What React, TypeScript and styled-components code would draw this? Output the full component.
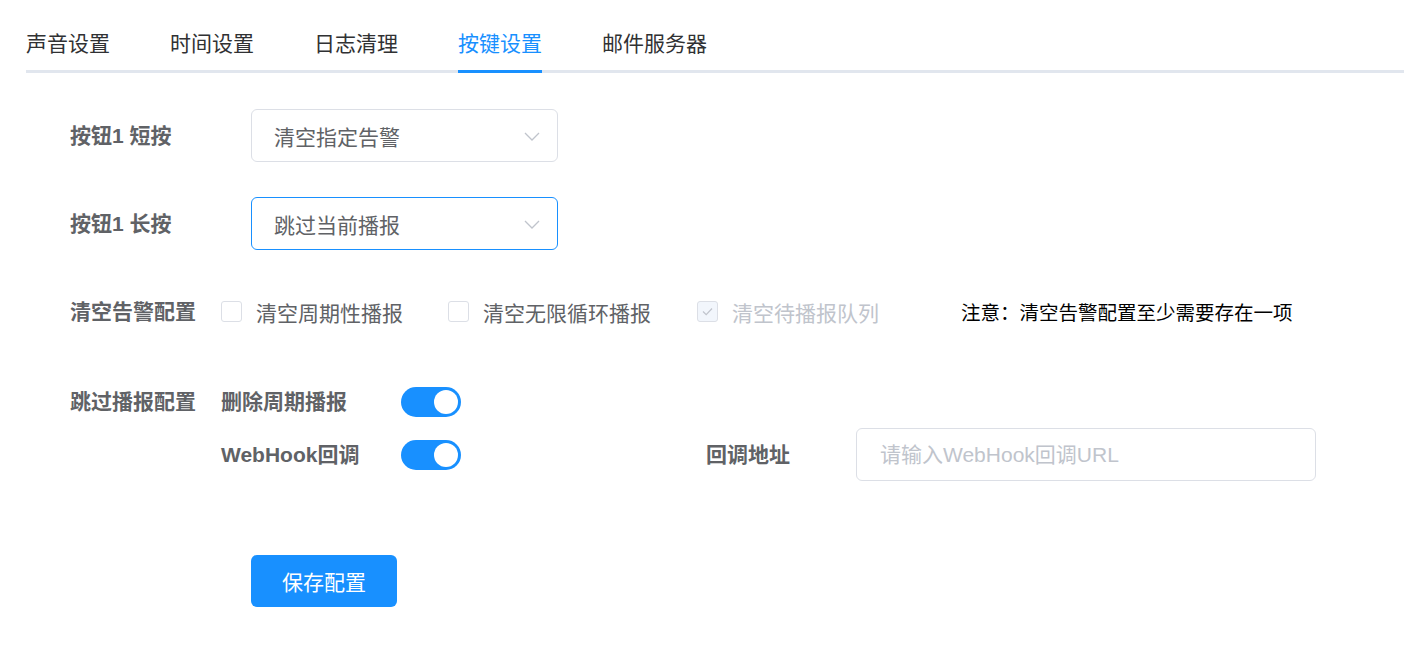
import React, { useState } from "react";
import styled, { createGlobalStyle } from "styled-components";

const BLUE = "#1890ff";
const FONT = `"Liberation Sans", "Noto Sans CJK SC", sans-serif`;

const GlobalStyle = createGlobalStyle`
  html, body {
    margin: 0;
    padding: 0;
    background: #fff;
    font-family: ${FONT};
  }
  * { box-sizing: border-box; }
`;

const Page = styled.div`
  padding: 16px 0 0 26px;
  width: 1404px;
  min-height: 656px;
`;

const TabBar = styled.div`
  display: flex;
  border-bottom: 3px solid #e1e6ee;
`;

const TabItem = styled.div<{ $active?: boolean }>`
  height: 57px;
  line-height: 55px;
  font-size: 21px;
  margin-right: 60px;
  margin-bottom: -3px;
  border-bottom: 3px solid ${(p) => (p.$active ? BLUE : "transparent")};
  color: ${(p) => (p.$active ? BLUE : "#303133")};
  cursor: pointer;
  white-space: nowrap;
`;

const Form = styled.div`
  margin-top: 36px;
  padding-left: 44px;
  display: flex;
  flex-direction: column;
`;

const Row = styled.div<{ $gap?: number }>`
  display: flex;
  align-items: center;
  min-height: 53px;
  margin-top: ${(p) => p.$gap ?? 0}px;
`;

const Label = styled.div<{ $width: number }>`
  width: ${(p) => p.$width}px;
  flex: none;
  font-size: 21px;
  font-weight: 700;
  color: #606266;
  line-height: 30px;
  white-space: nowrap;
`;

const SelectBox = styled.div<{ $focused?: boolean }>`
  width: 307px;
  height: 53px;
  border: 1px solid ${(p) => (p.$focused ? BLUE : "#dcdfe6")};
  border-radius: 6px;
  display: flex;
  align-items: center;
  justify-content: space-between;
  padding: 0 16px 0 22px;
  font-size: 21px;
  color: #606266;
  background: #fff;
`;

const Arrow = () => (
  <svg width="18" height="18" viewBox="0 0 18 18" fill="none">
    <polyline points="2,6 9,13 16,6" stroke="#c0c4cc" strokeWidth="1.3" />
  </svg>
);

const CheckItem = styled.label<{ $disabled?: boolean; $after: number }>`
  display: flex;
  align-items: center;
  margin-right: ${(p) => p.$after}px;
  font-size: 21px;
  color: ${(p) => (p.$disabled ? "#c0c4cc" : "#606266")};
  white-space: nowrap;
`;

const Box = styled.span<{ $disabled?: boolean }>`
  width: 21px;
  height: 21px;
  border: 1px solid #dcdfe6;
  border-radius: 3px;
  margin-right: 14px;
  display: inline-flex;
  align-items: center;
  justify-content: center;
  background: ${(p) => (p.$disabled ? "#f2f6fc" : "#fff")};
`;

const Note = styled.span`
  font-size: 19.5px;
  color: #000;
  white-space: nowrap;
`;

const SkipBlock = styled.div`
  display: flex;
  align-items: flex-start;
  margin-top: 49px;
`;

const SubRows = styled.div`
  display: flex;
  flex-direction: column;
  gap: 11px;
`;

const SubRow = styled.div<{ $tall?: boolean }>`
  display: flex;
  align-items: center;
  height: ${(p) => (p.$tall ? 53 : 30)}px;
`;

const SwitchTrack = styled.button<{ $on: boolean }>`
  width: 60px;
  height: 30px;
  border-radius: 15px;
  border: none;
  padding: 0 3px;
  display: flex;
  align-items: center;
  justify-content: ${(p) => (p.$on ? "flex-end" : "flex-start")};
  background: ${(p) => (p.$on ? BLUE : "#dcdfe6")};
  cursor: pointer;
  flex: none;
`;

const Knob = styled.span`
  width: 24px;
  height: 24px;
  border-radius: 50%;
  background: #fff;
`;

const Spacer = styled.div<{ $w: number }>`
  width: ${(p) => p.$w}px;
  flex: none;
`;

const TextInput = styled.input`
  width: 460px;
  height: 53px;
  border: 1px solid #dcdfe6;
  border-radius: 6px;
  padding: 0 23px;
  font-size: 21px;
  font-family: ${FONT};
  color: #606266;
  outline: none;
  &::placeholder {
    color: #c0c4cc;
  }
`;

const SaveButton = styled.button`
  margin-top: 74px;
  margin-left: 181px;
  width: 146px;
  height: 52px;
  border: none;
  border-radius: 6px;
  background: ${BLUE};
  color: #fff;
  font-size: 21px;
  font-family: ${FONT};
  cursor: pointer;
  align-self: flex-start;
`;

const Switch = ({ on, onToggle }: { on: boolean; onToggle: () => void }) => (
  <SwitchTrack $on={on} onClick={onToggle}>
    <Knob />
  </SwitchTrack>
);

const tabs = ["声音设置", "时间设置", "日志清理", "按键设置", "邮件服务器"];

export default function App() {
  const [active, setActive] = useState(3);
  const [delPeriodic, setDelPeriodic] = useState(true);
  const [webhook, setWebhook] = useState(true);

  return (
    <Page>
      <GlobalStyle />
      <TabBar>
        {tabs.map((t, i) => (
          <TabItem key={t} $active={i === active} onClick={() => setActive(i)}>
            {t}
          </TabItem>
        ))}
      </TabBar>

      <Form>
        <Row>
          <Label $width={181}>按钮1 短按</Label>
          <SelectBox>
            <span>清空指定告警</span>
            <Arrow />
          </SelectBox>
        </Row>

        <Row $gap={35}>
          <Label $width={181}>按钮1 长按</Label>
          <SelectBox $focused>
            <span>跳过当前播报</span>
            <Arrow />
          </SelectBox>
        </Row>

        <Row $gap={35}>
          <Label $width={151}>清空告警配置</Label>
          <CheckItem $after={45}>
            <Box />
            清空周期性播报
          </CheckItem>
          <CheckItem $after={46}>
            <Box />
            清空无限循环播报
          </CheckItem>
          <CheckItem $disabled $after={82}>
            <Box $disabled>
              <svg width="13" height="13" viewBox="0 0 13 13" fill="none">
                <polyline points="2,6.5 5.2,9.7 11,3.5" stroke="#c0c4cc" strokeWidth="1.2" />
              </svg>
            </Box>
            清空待播报队列
          </CheckItem>
          <Note>注意：清空告警配置至少需要存在一项</Note>
        </Row>

        <SkipBlock>
          <Label $width={151}>跳过播报配置</Label>
          <SubRows>
            <SubRow>
              <Label $width={180}>删除周期播报</Label>
              <Switch on={delPeriodic} onToggle={() => setDelPeriodic(!delPeriodic)} />
            </SubRow>
            <SubRow $tall>
              <Label $width={180}>WebHook回调</Label>
              <Switch on={webhook} onToggle={() => setWebhook(!webhook)} />
              <Spacer $w={245} />
              <Label $width={150}>回调地址</Label>
              <TextInput placeholder="请输入WebHook回调URL" />
            </SubRow>
          </SubRows>
        </SkipBlock>

        <SaveButton>保存配置</SaveButton>
      </Form>
    </Page>
  );
}
